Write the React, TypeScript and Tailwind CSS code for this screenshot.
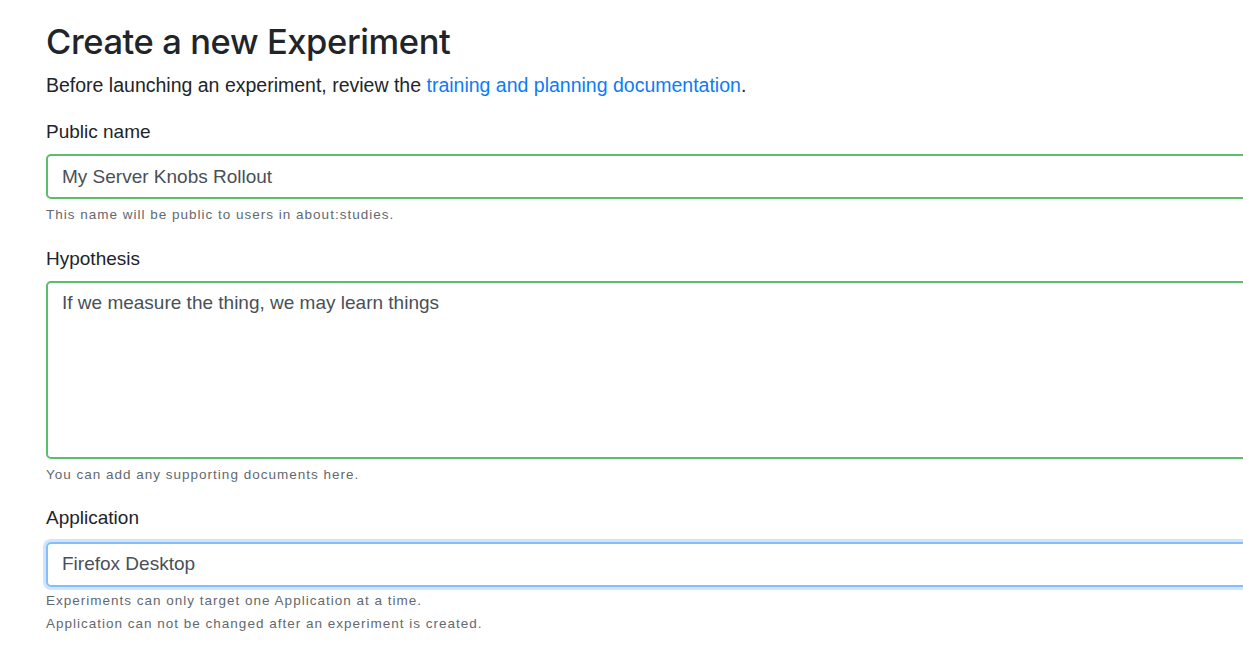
import React from "react";

const helper = "text-[13.5px] leading-[23px] tracking-[1px] text-[#62696f]";
const label = "block text-[19px] leading-[29px] text-[#212529]";

export default function App() {
  return (
    <div className="w-screen h-screen overflow-hidden bg-white font-['Liberation_Sans',Arial,sans-serif]">
      <div className="w-[1260px] pl-[46px] pt-[20px]">
        <h1 className="font-['Inter',sans-serif] text-[34.5px] leading-[43px] font-medium text-[#212529] tracking-[-0.4px]">
          Create a new Experiment
        </h1>
        <p className="mt-[8px] text-[19.5px] leading-[29px] text-[#212529]">
          Before launching an experiment, review the{" "}
          <a href="#" className="text-[#0b7cf7]">
            training and planning documentation
          </a>
          .
        </p>

        <form className="mt-[17px]">
          <div>
            <label className={label}>Public name</label>
            <input
              readOnly
              value="My Server Knobs Rollout"
              className="mt-[8px] block w-full h-[45px] px-[14px] rounded-[5px] border-2 border-[#5cbd6b] text-[19px] text-[#495057] outline-none"
            />
            <div className={`mt-[4px] ${helper}`}>This name will be public to users in about:studies.</div>
          </div>

          <div className="mt-[18px]">
            <label className={label}>Hypothesis</label>
            <textarea
              readOnly
              value="If we measure the thing, we may learn things"
              className="mt-[8px] block w-full h-[178px] px-[14px] py-[5px] rounded-[5px] border-2 border-[#5cbd6b] text-[19px] leading-[29px] text-[#495057] outline-none resize-none"
            />
            <div className={`mt-[4px] ${helper}`}>You can add any supporting documents here.</div>
          </div>

          <div className="mt-[17px]">
            <label className={label}>Application</label>
            <div className="mt-[10px] flex items-center w-full h-[45px] px-[14px] rounded-[5px] border-2 border-[#86bdfb] shadow-[0_0_0_3px_#cfe4fd] text-[19px] text-[#495057]">
              Firefox Desktop
            </div>
            <div className={`mt-[2px] ${helper}`}>
              <div>Experiments can only target one Application at a time.</div>
              <div>Application can not be changed after an experiment is created.</div>
            </div>
          </div>
        </form>
      </div>
    </div>
  );
}
